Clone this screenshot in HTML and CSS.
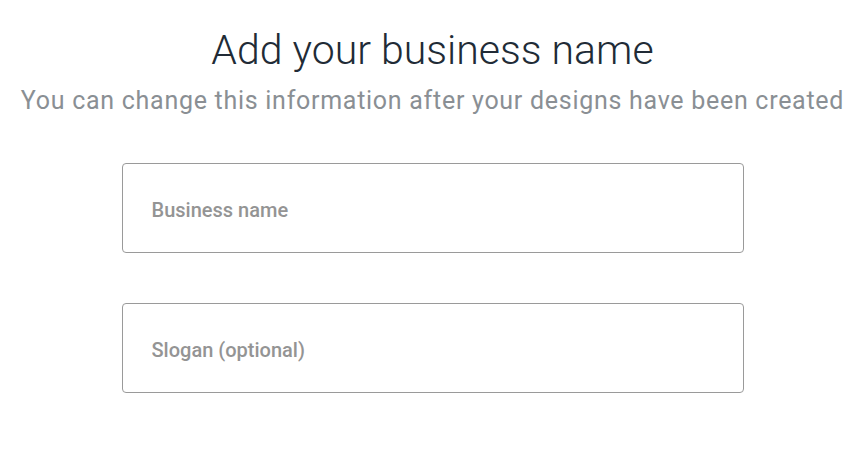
FILE: index.html
```html
<!DOCTYPE html>
<html>
<head>
<meta charset="utf-8">
<link rel="stylesheet" href="styles.css">
</head>
<body>
<main class="page">
  <h1 class="title">Add your business name</h1>
  <p class="subtitle">You can change this information after your designs have been created</p>
  <form class="form">
    <div class="field"><input class="input" type="text" placeholder="Business name"></div>
    <div class="field"><input class="input" type="text" placeholder="Slogan (optional)"></div>
  </form>
</main>
</body>
</html>
```
FILE: styles.css
```css
html, body {
  margin: 0;
  padding: 0;
  background: #fff;
}
.page {
  display: flex;
  flex-direction: column;
  align-items: center;
  font-family: Roboto, "Liberation Sans", sans-serif;
  padding-top: 26px;
}
.title {
  margin: 0;
  font-weight: 300;
  font-size: 41px;
  line-height: 48px;
  color: #212b36;
}
.subtitle {
  margin: 12px 0 0;
  font-size: 25px;
  line-height: 30px;
  letter-spacing: 0.72px;
  color: #8a8f94;
  white-space: nowrap;
}
.form {
  display: flex;
  flex-direction: column;
  gap: 50px;
  margin-top: 47px;
  width: 622px;
}
.field {
  display: flex;
}
.input {
  flex: 1;
  box-sizing: border-box;
  height: 90px;
  border: 1px solid #9a9a9a;
  border-radius: 4px;
  padding: 3px 29px 0;
  font-family: inherit;
  font-size: 20px;
  font-weight: 500;
  color: #333;
  outline: none;
}
.input::placeholder {
  color: #949494;
}
```
